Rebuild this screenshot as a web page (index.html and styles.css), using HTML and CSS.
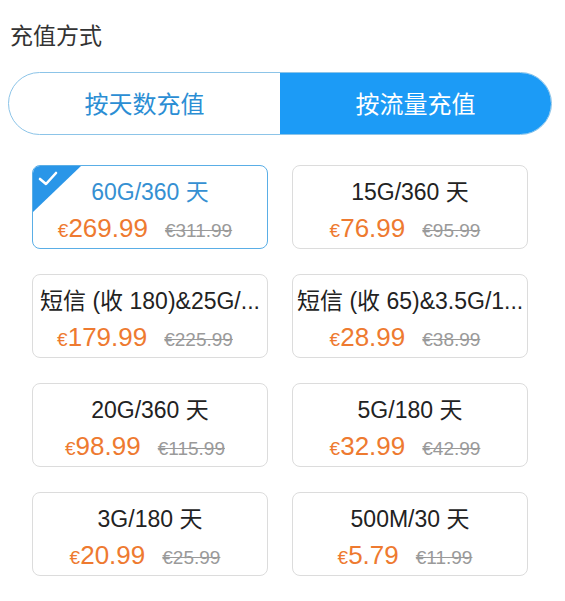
FILE: index.html
```html
<!DOCTYPE html>
<html lang="zh-CN">
<head>
    <meta charset="UTF-8">
    <meta name="viewport" content="width=device-width, initial-scale=1.0">
    <title>充值方式</title>
    <link rel="stylesheet" href="styles.css">
</head>
<body>
    <div class="page">
        <h2 class="heading">充值方式</h2>

        <div class="toggle">
            <div class="toggle-item">按天数充值</div>
            <div class="toggle-item active">按流量充值</div>
        </div>

        <div class="plans">
            <div class="plan selected">
                <svg class="check" width="48" height="46" viewBox="0 0 48 46">
                    <path d="M0 0 H48 L0 46 Z" fill="#2a96e8"/>
                    <path d="M7 13 L13 18 L23 7" fill="none" stroke="#fff" stroke-width="2.6" stroke-linecap="round" stroke-linejoin="round"/>
                </svg>
                <div class="plan-name">60G/360 天</div>
                <div class="plan-price"><span class="price"><small>€</small>269.99</span><s class="old">€311.99</s></div>
            </div>
            <div class="plan">
                <div class="plan-name">15G/360 天</div>
                <div class="plan-price"><span class="price"><small>€</small>76.99</span><s class="old">€95.99</s></div>
            </div>
            <div class="plan">
                <div class="plan-name">短信 (收 180)&amp;25G/...</div>
                <div class="plan-price"><span class="price"><small>€</small>179.99</span><s class="old">€225.99</s></div>
            </div>
            <div class="plan">
                <div class="plan-name">短信 (收 65)&amp;3.5G/1...</div>
                <div class="plan-price"><span class="price"><small>€</small>28.99</span><s class="old">€38.99</s></div>
            </div>
            <div class="plan">
                <div class="plan-name">20G/360 天</div>
                <div class="plan-price"><span class="price"><small>€</small>98.99</span><s class="old">€115.99</s></div>
            </div>
            <div class="plan">
                <div class="plan-name">5G/180 天</div>
                <div class="plan-price"><span class="price"><small>€</small>32.99</span><s class="old">€42.99</s></div>
            </div>
            <div class="plan">
                <div class="plan-name">3G/180 天</div>
                <div class="plan-price"><span class="price"><small>€</small>20.99</span><s class="old">€25.99</s></div>
            </div>
            <div class="plan">
                <div class="plan-name">500M/30 天</div>
                <div class="plan-price"><span class="price"><small>€</small>5.79</span><s class="old">€11.99</s></div>
            </div>
        </div>
    </div>
</body>
</html>
```

FILE: styles.css
```css
body {
    margin: 0;
    background: #fff;
    font-family: "Liberation Sans", "Noto Sans CJK SC", sans-serif;
    color: #222;
}
.page {
    padding: 21px 13px 0 8px;
}
.heading {
    margin: 0 0 21px 2px;
    font-size: 23px;
    font-weight: normal;
    line-height: 30px;
    color: #333;
}
.toggle {
    display: flex;
    height: 63px;
    border-radius: 32px;
    border: 1px solid #8cc4e8;
    box-sizing: border-box;
    overflow: hidden;
}
.toggle-item {
    flex: 1;
    display: flex;
    align-items: center;
    justify-content: center;
    padding-bottom: 2px;
    font-size: 24px;
    color: #2b8ed4;
}
.toggle-item.active {
    background: #1c9bf6;
    color: #fff;
}
.plans {
    display: grid;
    grid-template-columns: 236px 236px;
    column-gap: 24px;
    row-gap: 25px;
    margin-top: 30px;
    padding-left: 24px;
}
.plan {
    position: relative;
    height: 84px;
    box-sizing: border-box;
    border: 1px solid #dcdcdc;
    border-radius: 8px;
    overflow: hidden;
    padding: 12px 4px 0 4px;
    text-align: center;
}
.plan.selected {
    border-color: #5aaee6;
}
.check {
    position: absolute;
    top: 0;
    left: 0;
}
.plan-name {
    font-size: 23px;
    line-height: 28px;
    white-space: nowrap;
}
.selected .plan-name {
    color: #3590d2;
}
.plan-price {
    margin-top: 6px;
    padding-right: 10px;
    line-height: 32px;
    white-space: nowrap;
}
.price {
    font-size: 26px;
    color: #ee7a30;
}
.price small {
    font-size: 19px;
}
.old {
    margin-left: 17px;
    font-size: 19px;
    color: #9a9a9a;
}
```
